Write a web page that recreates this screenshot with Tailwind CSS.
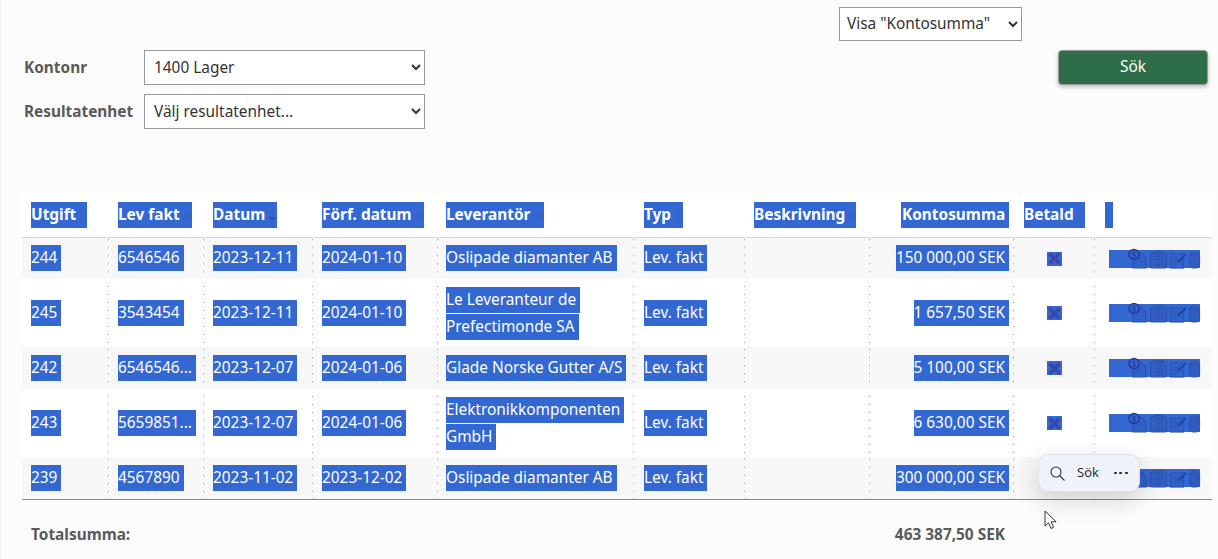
<!DOCTYPE html>
<html lang="sv">
<head>
  <meta charset="UTF-8">
  <title>Kontoutdrag</title>
  <script src="https://cdn.jsdelivr.net/npm/@tailwindcss/browser@4"></script>
</head>
<body class="bg-[#fcfcfc] font-['Noto_Sans',sans-serif] text-[15.4px] text-[#333] overflow-hidden">
  <div class="relative h-[559px] w-[1218px] border-l-2 border-[#f5f5f5] pt-[7px] pl-[20px]">
    <!-- Filter -->
    <div class="flex justify-end pr-[196px]">
      <select class="h-[34px] w-[183px] border border-[#999] bg-white pb-[2px] pl-[3px]"><option>Visa "Kontosumma"</option></select>
    </div>
    <div class="mt-[9px] flex items-start justify-between pl-[2px] pr-[10px]">
      <div class="flex flex-col gap-[9px]">
        <div class="flex items-center">
          <label class="w-[120px] font-bold text-[#5a5a5a]">Kontonr</label>
          <select class="h-[35px] w-[281px] border border-[#999] bg-white pb-[1px] pl-[5px]"><option>1400 Lager</option></select>
        </div>
        <div class="flex items-center">
          <label class="w-[120px] font-bold text-[#5a5a5a]">Resultatenhet</label>
          <select class="h-[35px] w-[281px] border border-[#999] bg-white pb-[1px] pl-[5px]"><option>Välj resultatenhet...</option></select>
        </div>
      </div>
      <button class="h-[35px] w-[150px] rounded-[4px] border border-[#999] bg-[#2d6e48] pb-[2px] text-white shadow-[0_2px_4px_rgba(0,0,0,0.25)]">Sök</button>
    </div>

    <!-- Tabell -->
    <table class="mt-[65px] w-[1190px] table-fixed border-collapse">
      <colgroup>
        <col class="w-[87px]"><col class="w-[95px]"><col class="w-[109px]"><col class="w-[125px]"><col class="w-[196px]"><col class="w-[111px]"><col class="w-[125px]"><col class="w-[144px]"><col class="w-[81px]"><col class="w-[117px]">
      </colgroup>
      <thead>
        <tr id="head" class="h-[43px] border-b border-[#d8d8d8] bg-white text-left font-bold text-white"></tr>
      </thead>
      <tbody id="rows"></tbody>
    </table>

    <div class="flex h-[70px] items-center justify-between pl-[9px] pr-[213px] font-bold text-[#5a5a5a]">
      <span>Totalsumma:</span>
      <span>463 387,50 SEK</span>
    </div>

    <!-- Popup for markerad text -->
    <div class="absolute left-[1036px] top-[454px] flex h-[38px] w-[102px] items-center rounded-[10px] border border-[#dfe2e8] bg-[#eff2fa] pl-[11px] text-[13px] text-[#222] shadow-[0_8px_24px_rgba(0,0,0,0.16)]">
      <svg class="h-[15px] w-[15px]" viewBox="0 0 15 15" fill="none" stroke="#333" stroke-width="1.1"><circle cx="6" cy="6" r="5"/><path d="M9.500 9.500l5 5"/></svg>
      <span class="ml-[12px] font-['Open_Sans',sans-serif]">Sök</span>
      <span class="ml-[15px] flex gap-[2.500px]"><i class="h-[2.500px] w-[3px] rounded-full bg-[#222]"></i><i class="h-[2.500px] w-[3px] rounded-full bg-[#222]"></i><i class="h-[2.500px] w-[3px] rounded-full bg-[#222]"></i></span>
    </div>
    <svg class="absolute left-[1042px] top-[510px] h-[20px] w-[14px]" viewBox="0 0 14 20" fill="#fff" stroke="#333" stroke-width="1"><path d="M1 1v15l3.500-3.200 2.500 5.700 2.600-1.200-2.500-5.500h5z"/></svg>
  </div>

  <script>
    const carets = (down = "#3a62c8") => `<span class="absolute right-[2px] top-[9px] h-0 w-0 border-x-[3.5px] border-b-[4px] border-x-transparent border-b-[#3a62c8]"></span><span class="absolute right-[2px] top-[15px] h-0 w-0 border-x-[3.5px] border-t-[4px] border-x-transparent" style="border-top-color:${down}"></span>`;
    const headers = [
      ["Utgift", "pl-[9px]", "w-[56px]", carets()],
      ["Lev fakt", "pl-[9px]", "w-[74px]", carets()],
      ["Datum", "pl-[9px]", "w-[64px]", carets("#2c4f9e")],
      ["Förf. datum", "pl-[9px]", "w-[102px]", carets()],
      ["Leverantör", "pl-[8px]", "w-[98px]", carets()],
      ["Typ", "pl-[10px]", "w-[39px]", carets()],
      ["Beskrivning", "pl-[9px]", "w-[102px]", carets()],
      ["Kontosumma", "pr-[5px] text-right", "w-[108px] pl-[1px] text-left", ""],
      ["Betald", "pl-[10px]", "w-[61px]", carets()],
      ["", "pl-[10px]", "w-[8px]", ""],
    ];
    document.getElementById("head").innerHTML = headers.map(([t, cell, w, icon]) =>
      `<th class="${cell}"><span class="relative inline-block h-[26px] bg-[#3367d1] align-top leading-[25px] ${w}">${t}${icon}</span></th>`).join("");

    const data = [
      ["244", "6546546", "2023-12-11", "2024-01-10", ["Oslipade diamanter AB"], "150 000,00 SEK"],
      ["245", "3543454", "2023-12-11", "2024-01-10", ["Le Leveranteur de", "Prefectimonde SA"], "1 657,50 SEK"],
      ["242", "6546546...", "2023-12-07", "2024-01-06", ["Glade Norske Gutter A/S"], "5 100,00 SEK"],
      ["243", "5659851...", "2023-12-07", "2024-01-06", ["Elektronikkomponenten", "GmbH"], "6 630,00 SEK"],
      ["239", "4567890", "2023-11-02", "2023-12-02", ["Oslipade diamanter AB"], "300 000,00 SEK"],
    ];
    const mark = (t, extra = "") => `<span class="inline-block h-[26px] bg-[#3367d1] pr-[4px] leading-[25px] text-white align-top ${extra}">${t}</span>`;
    const dots = "bg-[linear-gradient(transparent_1px,#999_1px,#999_2px,transparent_2px)] bg-[length:1px_8px] bg-right bg-repeat-y";
    const icons = `<span class="mb-[2px] inline-block h-[18px] w-[91px] bg-[#3367d1] align-middle">
      <svg class="h-[18px] w-[91px] overflow-visible" viewBox="0 0 91 18" fill="#2f60c8" stroke="#2c54b2" stroke-width="1.2">
        <path d="M24 3h8l5 5v10H24z"/>
        <circle cx="25" cy="4.500" r="5" fill="#3a62c8" stroke="#1f3a98" stroke-width="1.400"/>
        <text x="25" y="7.500" font-size="8" font-family="Noto Sans" text-anchor="middle" fill="#1f3a98" stroke="none">$</text>
        <rect x="41.500" y="3" width="16" height="15" rx="2" fill="#3060c4"/><path d="M45 6.500h9M45 9.500h9M45 12.500h9M45 15h9M49.500 4v13" stroke-width="1"/><rect x="45.500" y="1.500" width="8" height="2.500" fill="#3060c4"/>
        <rect x="61.500" y="4" width="13" height="14" fill="#3063ca"/><path d="M64 8h6M64 11h4M64 14h4" stroke-width="1"/><path d="M69 12l8-8" stroke="#24449f" stroke-width="2.200"/>
        <rect x="80.500" y="2" width="10" height="16" rx="4" fill="#2f5cc0"/><path d="M81 5.500h9"/>
      </svg></span>`;
    document.getElementById("rows").innerHTML = data.map((r, i) => `
      <tr class="${i % 2 ? "h-[68px] bg-white" : "h-[42px] bg-[#f7f7f7]"} text-left ${i === 4 ? "border-b border-[#888]" : ""}">
        <td class="pl-[9px] ${dots}">${mark(r[0], "w-[30px]")}</td>
        <td class="pl-[9px] ${dots}">${mark(r[1])}</td>
        <td class="pl-[9px] ${dots}">${mark(r[2])}</td>
        <td class="pl-[9px] ${dots}">${mark(r[3])}</td>
        <td class="pl-[8px] ${dots}"><div class="flex flex-col items-start gap-[1px]">${r[4].map(l => mark(l)).join("")}</div></td>
        <td class="pl-[10px] ${dots}">${mark("Lev. fakt")}</td>
        <td class="${dots}"></td>
        <td class="pr-[5px] text-right ${dots}">${mark(r[5])}</td>
        <td class="text-center ${dots}"><span class="mb-[2px] inline-flex h-[14px] w-[15px] items-center justify-center bg-[#3367d1] align-middle"><svg class="h-[13px] w-[13px]" viewBox="0 0 13 13" stroke="#3d45a8" stroke-width="3.200"><path d="M1.500 1.500l10 10M11.500 1.500l-10 10"/></svg></span></td>
        <td class="pl-[14px]">${icons}</td>
      </tr>`).join("");
  </script>
</body>
</html>
